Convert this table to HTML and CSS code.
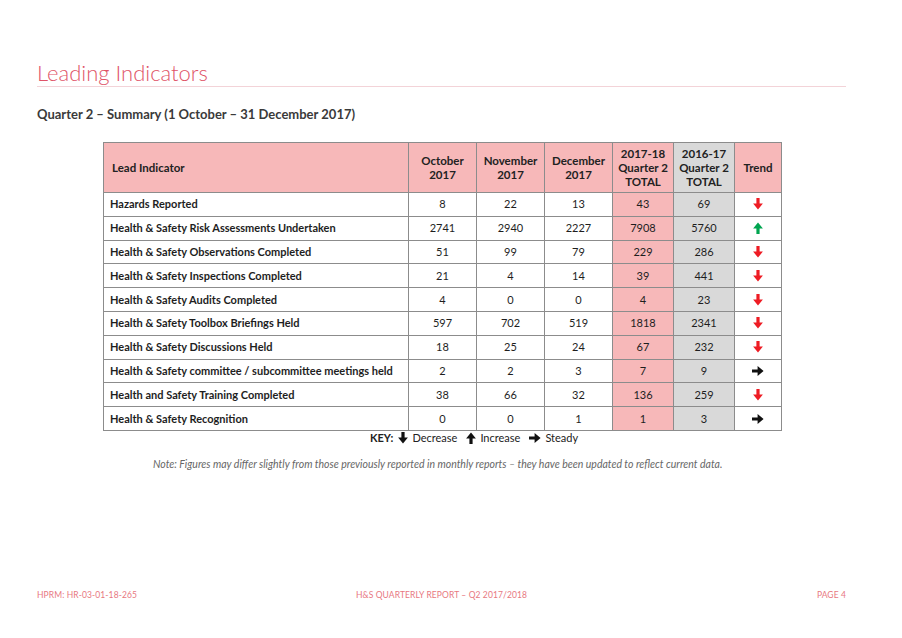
FILE: index.html
```html
<!DOCTYPE html>
<html>
<head>
<meta charset="utf-8">
<link rel="stylesheet" href="styles.css">
</head>
<body>
<div class="page">
  <h1 class="title">Leading Indicators</h1>
  <h2 class="subtitle">Quarter 2 – Summary (1 October – 31 December 2017)</h2>
  <table class="ind">
    <colgroup>
      <col class="c-name"><col class="c-m"><col class="c-m"><col class="c-m"><col class="c-t"><col class="c-t"><col class="c-tr">
    </colgroup>
    <thead>
      <tr>
        <th class="name">Lead Indicator</th>
        <th>October<br>2017</th>
        <th>November<br>2017</th>
        <th>December<br>2017</th>
        <th>2017-18<br>Quarter 2<br>TOTAL</th>
        <th class="grey">2016-17<br>Quarter 2<br>TOTAL</th>
        <th>Trend</th>
      </tr>
    </thead>
    <tbody>
      <tr><td class="name">Hazards Reported</td><td>8</td><td>22</td><td>13</td><td class="pink">43</td><td class="grey">69</td><td><svg class="arr down" viewBox="0 0 10 12"><path d="M3.4 0h3.2v5.6h3.3L5 11.6 0.1 5.6h3.3z"/></svg></td></tr>
      <tr><td class="name">Health &amp; Safety Risk Assessments Undertaken</td><td>2741</td><td>2940</td><td>2227</td><td class="pink">7908</td><td class="grey">5760</td><td><svg class="arr up" viewBox="0 0 10 12"><path d="M3.4 12h3.2V6.4h3.3L5 0.4 0.1 6.4h3.3z"/></svg></td></tr>
      <tr><td class="name">Health &amp; Safety Observations Completed</td><td>51</td><td>99</td><td>79</td><td class="pink">229</td><td class="grey">286</td><td><svg class="arr down" viewBox="0 0 10 12"><path d="M3.4 0h3.2v5.6h3.3L5 11.6 0.1 5.6h3.3z"/></svg></td></tr>
      <tr><td class="name">Health &amp; Safety Inspections Completed</td><td>21</td><td>4</td><td>14</td><td class="pink">39</td><td class="grey">441</td><td><svg class="arr down" viewBox="0 0 10 12"><path d="M3.4 0h3.2v5.6h3.3L5 11.6 0.1 5.6h3.3z"/></svg></td></tr>
      <tr><td class="name">Health &amp; Safety Audits Completed</td><td>4</td><td>0</td><td>0</td><td class="pink">4</td><td class="grey">23</td><td><svg class="arr down" viewBox="0 0 10 12"><path d="M3.4 0h3.2v5.6h3.3L5 11.6 0.1 5.6h3.3z"/></svg></td></tr>
      <tr><td class="name">Health &amp; Safety Toolbox Briefings Held</td><td>597</td><td>702</td><td>519</td><td class="pink">1818</td><td class="grey">2341</td><td><svg class="arr down" viewBox="0 0 10 12"><path d="M3.4 0h3.2v5.6h3.3L5 11.6 0.1 5.6h3.3z"/></svg></td></tr>
      <tr><td class="name">Health &amp; Safety Discussions Held</td><td>18</td><td>25</td><td>24</td><td class="pink">67</td><td class="grey">232</td><td><svg class="arr down" viewBox="0 0 10 12"><path d="M3.4 0h3.2v5.6h3.3L5 11.6 0.1 5.6h3.3z"/></svg></td></tr>
      <tr><td class="name">Health &amp; Safety committee / subcommittee meetings held</td><td>2</td><td>2</td><td>3</td><td class="pink">7</td><td class="grey">9</td><td><svg class="arr side" viewBox="0 0 12 10"><path d="M0 3.4h5.6V0.1L11.6 5 5.6 9.9V6.6H0z"/></svg></td></tr>
      <tr><td class="name">Health and Safety Training Completed</td><td>38</td><td>66</td><td>32</td><td class="pink">136</td><td class="grey">259</td><td><svg class="arr down" viewBox="0 0 10 12"><path d="M3.4 0h3.2v5.6h3.3L5 11.6 0.1 5.6h3.3z"/></svg></td></tr>
      <tr><td class="name">Health &amp; Safety Recognition</td><td>0</td><td>0</td><td>1</td><td class="pink">1</td><td class="grey">3</td><td><svg class="arr side" viewBox="0 0 12 10"><path d="M0 3.4h5.6V0.1L11.6 5 5.6 9.9V6.6H0z"/></svg></td></tr>
    </tbody>
  </table>
  <div class="key">
    <span class="key-label">KEY:</span>
    <span class="key-item"><svg class="karr" viewBox="0 0 10 12"><path d="M3.4 0h3.2v5.6h3.3L5 11.6 0.1 5.6h3.3z"/></svg>Decrease</span>
    <span class="key-item"><svg class="karr" viewBox="0 0 10 12"><path d="M3.4 12h3.2V6.4h3.3L5 0.4 0.1 6.4h3.3z"/></svg>Increase</span>
    <span class="key-item"><svg class="karr side" viewBox="0 0 12 10"><path d="M0 3.4h5.6V0.1L11.6 5 5.6 9.9V6.6H0z"/></svg>Steady</span>
  </div>
  <p class="note">Note: Figures may differ slightly from those previously reported in monthly reports – they have been updated to reflect current data.</p>
</div>
<footer class="foot">
  <span class="f-left">HPRM: HR-03-01-18-265</span>
  <span class="f-mid">H&amp;S QUARTERLY REPORT – Q2 2017/2018</span>
  <span class="f-right">PAGE 4</span>
</footer>
</body>
</html>
```
FILE: styles.css
```css
html, body {
  margin: 0;
  padding: 0;
  background: #ffffff;
}
body {
  width: 902px;
  height: 638px;
  font-family: Lato, "Liberation Sans", sans-serif;
  color: #222;
  display: flex;
  flex-direction: column;
}
.page {
  padding: 60px 56px 0 37px;
  flex: 1;
}
.title {
  margin: 0;
  font-family: "Lato", sans-serif;
  font-weight: 300;
  font-size: 22px;
  line-height: 26px;
  color: #e05468;
  padding-bottom: 0;
  border-bottom: 1px solid #f3d3d8;
}
.subtitle {
  margin: 18px 0 0 0;
  font-size: 13px;
  line-height: 18px;
  font-weight: 700;
  color: #3a3a3a;
}
.ind {
  margin: 19px 0 0 66px;
  border-collapse: collapse;
  width: 678px;
  table-layout: fixed;
  font-size: 11px;
  color: #1e1e1e;
}
.c-name { width: 305px; }
.c-m { width: 68px; }
.c-t { width: 61px; }
.c-tr { width: 47px; }
.ind th, .ind td {
  border: 1px solid #8c8c8c;
  text-align: center;
  padding: 0;
}
.ind th {
  background: #f7b8b9;
  height: 49px;
  font-weight: 700;
  font-size: 11.5px;
  line-height: 14px;
  color: #222;
}
.ind th.name {
  text-align: left;
  padding-left: 8px;
}
.ind th.grey, .ind td.grey { background: #d9d9d9; }
.ind td.pink { background: #f7b8b9; }
.ind td {
  height: 22.8px;
  line-height: 14px;
}
.ind td.name {
  text-align: left;
  padding-left: 6px;
  font-weight: 700;
}
.arr {
  width: 10px;
  height: 12px;
  display: block;
  margin: 0 auto;
}
.arr.down { fill: #ee1c24; }
.arr.up { fill: #00a550; }
.arr.side { fill: #111; width: 12px; height: 10px; }
.key {
  display: flex;
  gap: 9px;
  align-items: center;
  margin: 0 0 0 333px;
  font-size: 11px;
  line-height: 14px;
  color: #222;
}
.key-label { font-weight: 700; margin-right: -4px; }
.key-item {
  display: flex;
  align-items: center;
  gap: 4px;
}
.karr {
  width: 10px;
  height: 12px;
  fill: #111;
}
.karr.side { width: 12px; height: 10px; }
.note {
  margin: 13px 0 0 116px;
  font-size: 10.5px;
  font-style: italic;
  color: #666;
  line-height: 13px;
}
.foot {
  display: grid;
  grid-template-columns: 1fr auto 1fr;
  padding: 0 56px 38px 37px;
  font-size: 8.5px;
  color: #e8787f;
  letter-spacing: 0.1px;
}
.f-left { justify-self: start; }
.f-mid { justify-self: center; }
.f-right { justify-self: end; }
```
